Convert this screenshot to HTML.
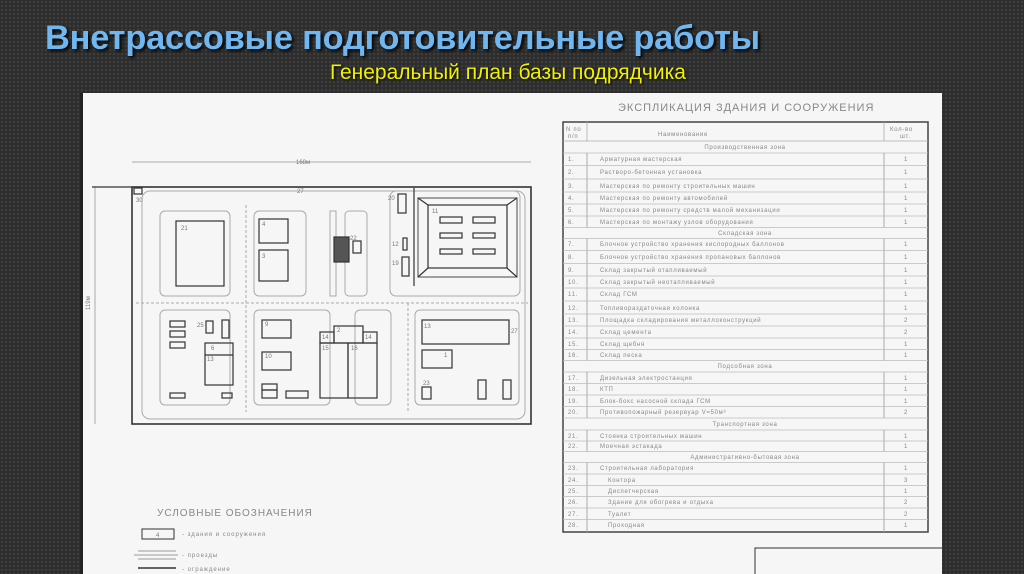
<!DOCTYPE html>
<html><head><meta charset="utf-8"><style>
html,body{margin:0;padding:0}
body{width:1024px;height:574px;overflow:hidden;position:relative;background-color:#2c2c2c;
background-image:radial-gradient(circle at 2px 2px,#3d3d3d 1.1px,transparent 1.6px);background-size:4px 4px;font-family:"Liberation Sans",sans-serif}
.t{position:absolute;left:45px;top:19px;font-size:34.4px;font-weight:bold;color:#70b6f0;white-space:nowrap;text-shadow:2px 2px 3px #000;letter-spacing:-0.2px}
.s{position:absolute;left:330px;top:61px;font-size:21px;color:#f2f200;white-space:nowrap;text-shadow:1px 1px 2px #000}
.p{position:absolute;left:80px;top:93px;width:859px;height:481px;background:#f6f6f6;border-left:3px solid #222}
svg{position:absolute;left:0;top:0}
</style></head><body>
<div class="t">Внетрассовые подготовительные работы</div>
<div class="s">Генеральный план базы подрядчика</div>
<div class="p"></div>
<svg width="1024" height="574" font-family="Liberation Sans, sans-serif">
<g fill="none" stroke="#aaa" stroke-width="1">
<rect x="142" y="191" width="383" height="228" rx="8"/>
<rect x="160" y="211" width="70" height="85" rx="5"/>
<rect x="254" y="211" width="52" height="85" rx="5"/>
<rect x="330" y="211" width="6" height="85"/>
<rect x="345" y="211" width="22" height="85" rx="4"/>
<rect x="390" y="191" width="130" height="105" rx="6"/>
<rect x="160" y="310" width="70" height="95" rx="5"/>
<rect x="254" y="310" width="76" height="95" rx="5"/>
<rect x="355" y="310" width="36" height="95" rx="5"/>
<rect x="415" y="310" width="104" height="95" rx="5"/>
<line x1="136" y1="303" x2="528" y2="303" stroke-dasharray="3 2"/>
<line x1="246" y1="205" x2="246" y2="412" stroke-dasharray="3 2"/>
<line x1="408" y1="303" x2="408" y2="412" stroke-dasharray="3 2"/>
<line x1="132" y1="162" x2="531" y2="162"/>
<line x1="95" y1="187" x2="95" y2="424"/>
</g>
<g fill="none" stroke="#333" stroke-width="1.2">
<rect x="132" y="187" width="399" height="237" stroke-width="1.6"/>
<line x1="92" y1="187" x2="132" y2="187"/>
<rect x="134" y="188" width="8" height="6"/>
<rect x="176" y="221" width="48" height="65"/>
<rect x="259" y="219" width="29" height="24"/>
<rect x="259" y="250" width="29" height="31"/>
<rect x="334" y="237" width="15" height="25" fill="#555"/>
<rect x="353" y="241" width="8" height="12"/>
<rect x="398" y="194" width="8" height="19"/>
<rect x="403" y="238" width="4" height="12"/>
<rect x="402" y="257" width="7" height="19"/>
<line x1="414" y1="188" x2="414" y2="286"/>
<rect x="418" y="198" width="99" height="79" stroke="#666"/>
<rect x="428" y="205" width="79" height="63"/>
<line x1="418" y1="198" x2="428" y2="205"/><line x1="517" y1="198" x2="507" y2="205"/>
<line x1="418" y1="277" x2="428" y2="268"/><line x1="517" y1="277" x2="507" y2="268"/>
<rect x="440" y="217" width="22" height="6"/><rect x="473" y="217" width="22" height="6"/>
<rect x="440" y="233" width="22" height="5"/><rect x="473" y="233" width="22" height="5"/>
<rect x="440" y="249" width="22" height="5"/><rect x="473" y="249" width="22" height="5"/>
<rect x="170" y="321" width="15" height="6"/><rect x="170" y="331" width="15" height="6"/><rect x="170" y="342" width="15" height="6"/>
<rect x="206" y="321" width="7" height="12"/><rect x="222" y="320" width="7" height="18"/>
<rect x="205" y="343" width="28" height="42"/><line x1="205" y1="355" x2="233" y2="355"/>
<rect x="170" y="393" width="15" height="5"/><rect x="222" y="393" width="10" height="5"/>
<rect x="262" y="320" width="29" height="18"/><rect x="262" y="352" width="29" height="18"/>
<rect x="262" y="384" width="15" height="6"/><rect x="262" y="390" width="15" height="8"/>
<rect x="286" y="391" width="22" height="7"/>
<rect x="334" y="326" width="29" height="17"/>
<rect x="320" y="332" width="14" height="11"/><rect x="363" y="332" width="14" height="11"/>
<rect x="320" y="343" width="28" height="55"/><rect x="348" y="343" width="29" height="55"/>
<rect x="422" y="320" width="87" height="24"/>
<rect x="422" y="350" width="30" height="18"/>
<rect x="422" y="387" width="9" height="12"/><rect x="478" y="380" width="8" height="19"/><rect x="503" y="380" width="8" height="19"/>
</g>
<g font-size="6" fill="#777">
<text x="296" y="164">168м</text>
<text x="297" y="193">27</text>
<text x="136" y="202">30</text>
<text x="181" y="230">21</text><text x="262" y="226">4</text><text x="262" y="258">3</text>
<text x="350" y="240">22</text><text x="388" y="200">20</text><text x="392" y="246">12</text><text x="392" y="265">19</text>
<text x="432" y="213">11</text><text x="197" y="327">25</text><text x="211" y="350">6</text><text x="207" y="361">13</text>
<text x="265" y="326">9</text><text x="265" y="358">10</text><text x="337" y="332">2</text><text x="322" y="339">14</text><text x="365" y="339">14</text>
<text x="322" y="350">15</text><text x="351" y="350">16</text><text x="424" y="328">13</text><text x="444" y="357">1</text><text x="423" y="385">23</text><text x="511" y="333">27</text>
<text x="90" y="310" transform="rotate(-90 90 310)">119м</text>
</g>
<text x="157" y="516" font-size="10" fill="#888" letter-spacing="1">УСЛОВНЫЕ  ОБОЗНАЧЕНИЯ</text>
<rect x="142" y="529" width="32" height="10" fill="none" stroke="#333"/>
<text x="156" y="537" font-size="6" fill="#777">4</text>
<text x="182" y="536" font-size="6" fill="#888" letter-spacing="1">- здания и сооружения</text>
<line x1="134" y1="555" x2="178" y2="555" stroke="#999"/><line x1="138" y1="551" x2="176" y2="551" stroke="#999"/><line x1="138" y1="559" x2="176" y2="559" stroke="#999"/>
<text x="182" y="557" font-size="6" fill="#888" letter-spacing="1">- проезды</text>
<line x1="138" y1="568" x2="176" y2="568" stroke="#333" stroke-width="1.5"/>
<text x="182" y="571" font-size="6" fill="#888" letter-spacing="1">- ограждение</text>
<text x="618" y="111" font-size="11" fill="#888" letter-spacing="1">ЭКСПЛИКАЦИЯ ЗДАНИЯ И СООРУЖЕНИЯ</text>
<rect x="563" y="122" width="365" height="410" fill="none" stroke="#444" stroke-width="1.5"/>
<g stroke="#aaa" stroke-width="0.8">
<line x1="563" y1="141" x2="928" y2="141"/>
<line x1="587" y1="122" x2="587" y2="141"/><line x1="884" y1="122" x2="884" y2="141"/>
</g>
<g font-size="6" fill="#888" letter-spacing="0.7" id="rows"></g>
<rect x="755" y="548" width="190" height="30" fill="none" stroke="#333"/>
</svg>
<script>
var rows=[["h","Производственная зона",147],["1.","Арматурная мастерская",159],["2.","Растворо-бетонная установка",172],["3.","Мастерская по ремонту строительных машин",186],["4.","Мастерская по ремонту автомобилей",198],["5.","Мастерская по ремонту средств малой механизации",210],["6.","Мастерская по монтажу узлов оборудования",222],["h","Складская зона",233],["7.","Блочное устройство хранения кислородных баллонов",244],["8.","Блочное устройство хранения пропановых баллонов",257],["9.","Склад закрытый отапливаемый",270],["10.","Склад закрытый неотапливаемый",282],["11.","Склад ГСМ",294],["12.","Топливораздаточная колонка",308],["13.","Площадка складирования металлоконструкций",320,"2"],["14.","Склад цемента",332,"2"],["15.","Склад щебня",344],["16.","Склад песка",355],["h","Подсобная зона",366],["17.","Дизельная электростанция",378],["18.","КТП",389],["19.","Блок-бокс насосной склада ГСМ",401],["20.","Противопожарный резервуар V=50м³",412,"2"],["h","Транспортная зона",424],["21.","Стоянка строительных машин",436],["22.","Моечная эстакада",446],["h","Административно-бытовая зона",457],["23.","Строительная лаборатория",468],["24.","Контора",480,"3"],["25.","Диспетчерская",491],["26.","Здание для обогрева и отдыха",502,"2"],["27.","Туалет",514,"2"],["28.","Проходная",525]];
var g=document.getElementById('rows'),h='';
h+='<text x="566" y="131">N по</text><text x="568" y="138">п/п</text><text x="658" y="136">Наименование</text><text x="890" y="131">Кол-во</text><text x="900" y="138">шт.</text>';
var prev=141;
for(var i=0;i<rows.length;i++){var r=rows[i],y=r[2];var bot=(i+1<rows.length)?(y+rows[i+1][2])/2:532;
if(r[0]=="h"){h+='<text x="745" y="'+(y+2)+'" text-anchor="middle">'+r[1]+'</text>';}
else{h+='<text x="568" y="'+(y+2)+'">'+r[0]+'</text><text x="'+(i>27?608:600)+'" y="'+(y+2)+'">'+r[1]+'</text><text x="904" y="'+(y+2)+'">'+(r[3]||'1')+'</text>';
h+='<line x1="587" y1="'+prev+'" x2="587" y2="'+bot+'" stroke="#aaa"/><line x1="884" y1="'+prev+'" x2="884" y2="'+bot+'" stroke="#aaa"/>';}
if(i+1<rows.length)h+='<line x1="563" y1="'+bot+'" x2="928" y2="'+bot+'" stroke="#bbb" stroke-width="0.8"/>';
prev=bot;}
g.innerHTML=h;
</script>
</body></html>
